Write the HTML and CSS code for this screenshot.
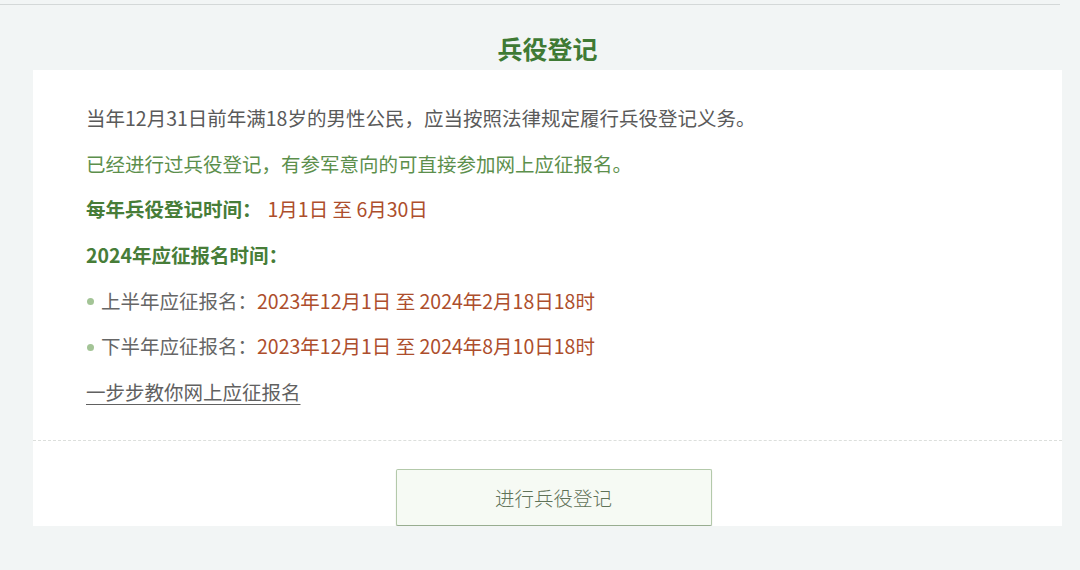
FILE: index.html
```html
<!DOCTYPE html>
<html lang="zh-CN">
<head>
<meta charset="utf-8">
<title>兵役登记</title>
<link rel="stylesheet" href="styles.css">
</head>
<body>
<div class="page">
  <div class="topline"></div>
  <h1 class="title">兵役登记</h1>
  <div class="card">
    <div class="content">
      <p class="line gray">当年12月31日前年满18岁的男性公民，应当按照法律规定履行兵役登记义务。</p>
      <p class="line green">已经进行过兵役登记，有参军意向的可直接参加网上应征报名。</p>
      <p class="line"><span class="label">每年兵役登记时间：</span><span class="date">1月1日 至 6月30日</span></p>
      <p class="line"><span class="label">2024年应征报名时间：</span></p>
      <p class="line bullet"><span class="dot"></span><span class="gray">上半年应征报名：</span><span class="date">2023年12月1日 至 2024年2月18日18时</span></p>
      <p class="line bullet"><span class="dot"></span><span class="gray">下半年应征报名：</span><span class="date">2023年12月1日 至 2024年8月10日18时</span></p>
      <p class="line"><a class="link" href="#">一步步教你网上应征报名</a></p>
    </div>
    <div class="footer">
      <button class="btn" type="button">进行兵役登记</button>
    </div>
  </div>
</div>
</body>
</html>
```

FILE: styles.css
```css
html, body {
  margin: 0;
  padding: 0;
  background: #f2f5f5;
}
body {
  font-family: "Noto Sans CJK SC", "Noto Sans", "Liberation Sans", sans-serif;
}
.page {
  width: 1062px;
}
.topline {
  margin-top: 4px;
  width: 1060px;
  border-top: 1px solid #d4d8d8;
}
.title {
  margin: 0;
  padding-top: 28px;
  height: 37px;
  line-height: 30px;
  text-align: center;
  font-size: 25px;
  font-weight: 700;
  color: #3f7a34;
  padding-left: 33px;
}
.card {
  margin-left: 33px;
  width: 1029px;
  background: #ffffff;
}
.content {
  padding: 33px 53px 33px;
  display: flex;
  flex-direction: column;
  gap: 15.7px;
  border-bottom: 1px dashed #dcdfdc;
}
.line {
  margin: 0;
  height: 30px;
  line-height: 30px;
  font-size: 19.5px;
  white-space: nowrap;
}
.gray {
  color: #5a5a5a;
}
.green {
  color: #5c8f4c;
}
.label {
  font-weight: 700;
  color: #477d38;
  margin-right: 6px;
}
.date {
  color: #ad4e2c;
}
.bullet {
  display: flex;
  align-items: center;
}
.bullet .gray {
  color: #666666;
}
.dot {
  width: 7px;
  height: 7px;
  border-radius: 50%;
  background: #a3c496;
  margin: 2px 7px 0 1px;
  flex: none;
}
.link {
  color: #616161;
  text-decoration: underline;
  text-underline-offset: 4px;
  text-decoration-thickness: 1px;
}
.footer {
  padding-top: 28px;
  display: flex;
  justify-content: center;
}
.btn {
  margin-left: 12px;
  width: 316px;
  height: 57px;
  background: #f6faf4;
  border: 1px solid #b3c9aa;
  border-bottom-color: #98ad90;
  border-radius: 2px;
  box-shadow: 0 1px 1px rgba(90, 110, 80, 0.35);
  font-family: "Noto Sans CJK SC", "Noto Sans", sans-serif;
  font-size: 19.5px;
  font-weight: 300;
  color: #5f7257;
  padding: 0;
}
```
